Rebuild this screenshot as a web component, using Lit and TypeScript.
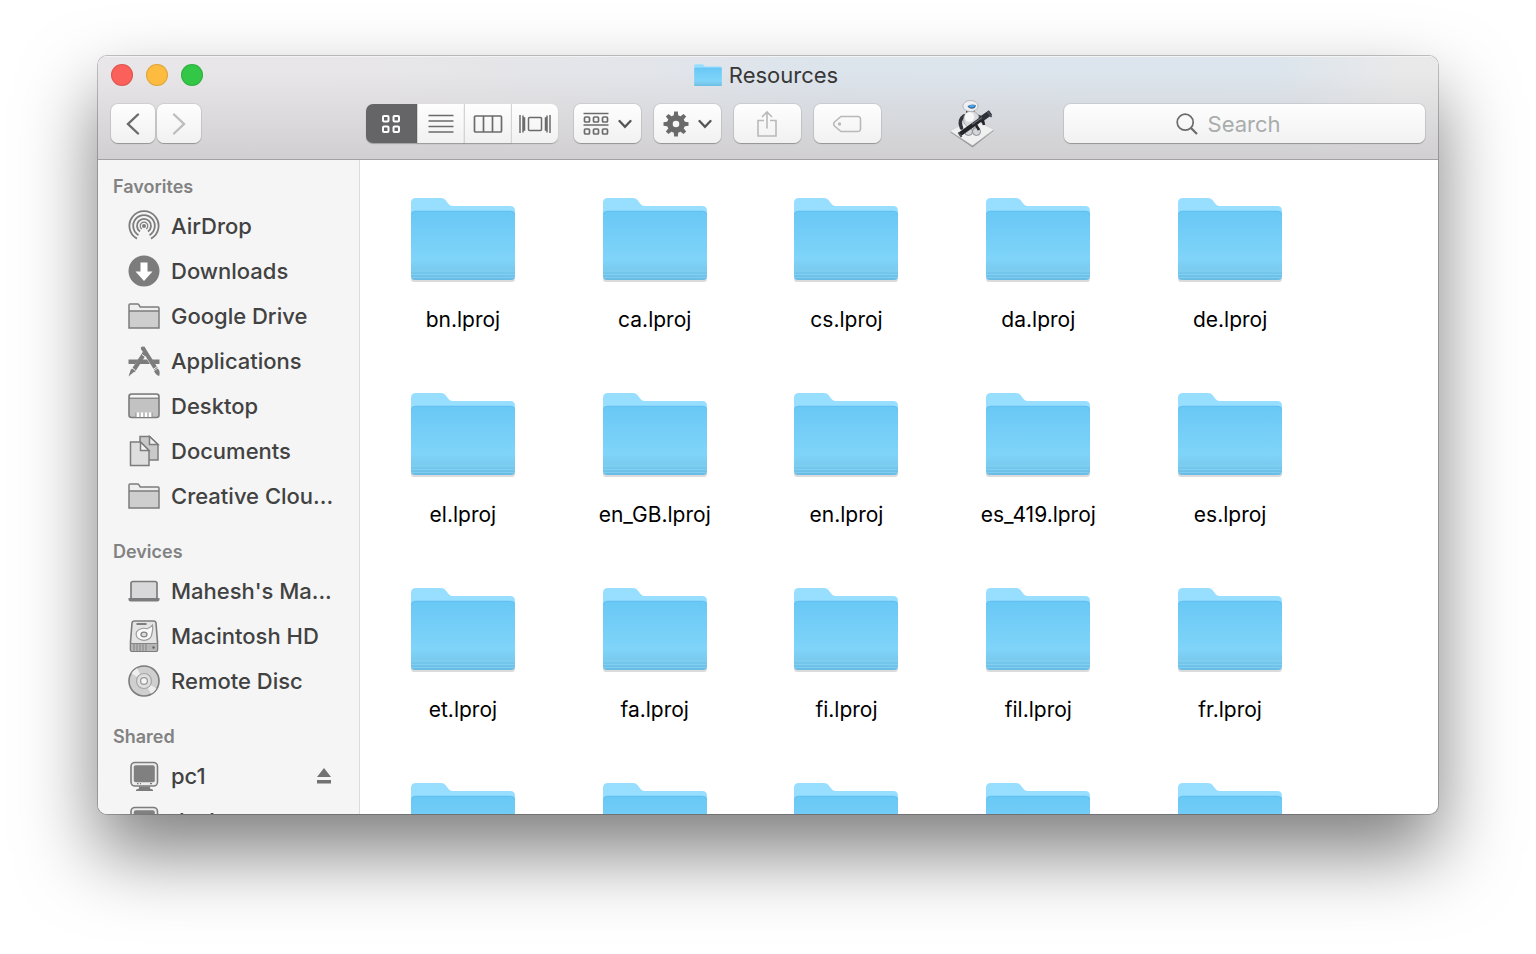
import { LitElement, html, css, svg, TemplateResult } from "lit";
import { customElement, property } from "lit/decorators.js";

type IconName =
  | "back" | "forward" | "grid" | "list" | "columns" | "flow" | "arrange" | "chevron"
  | "gear" | "share" | "tag" | "search" | "airdrop" | "downloads" | "folder"
  | "apps" | "desktop" | "documents" | "laptop" | "hd" | "disc" | "pc" | "eject" | "robot";

const icons: Record<IconName, [number, number, unknown]> = {
  back: [14, 22, svg`<path d="M12 1.500L2 11l10 9.500" fill="none" stroke="#6a6a6a" stroke-width="2.400" stroke-linecap="round"/>`],
  forward: [14, 22, svg`<path d="M2 1.500L12 11L2 20.500" fill="none" stroke="#bdbdc0" stroke-width="2.400" stroke-linecap="round"/>`],
  grid: [20, 20, svg`<g fill="none" stroke="#fff" stroke-width="2"><rect x="2" y="2" width="5.500" height="5.500" rx="1"/><rect x="12.500" y="2" width="5.500" height="5.500" rx="1"/><rect x="2" y="12.500" width="5.500" height="5.500" rx="1"/><rect x="12.500" y="12.500" width="5.500" height="5.500" rx="1"/></g>`],
  list: [26, 20, svg`<path d="M.5 1.500h25M.5 7h25M.5 12.500h25M.5 18h25" fill="none" stroke="#6b6b6b" stroke-width="1.600"/>`],
  columns: [30, 20, svg`<g fill="none" stroke="#6b6b6b" stroke-width="1.700"><rect x="1.500" y="2" width="27" height="16" rx="1"/><path d="M10.500 2v16M19.500 2v16"/></g>`],
  flow: [34, 20, svg`<g fill="none" stroke="#6b6b6b" stroke-width="1.500"><path d="M2 1v18M32 1v18M5 1.500v17M29 1.500v17M5 4h1.500v12H5M29 4h-1.500v12H29"/><rect x="10.500" y="3.500" width="13" height="13" rx="1"/></g>`],
  arrange: [26, 24, svg`<g fill="none" stroke="#6b6b6b" stroke-width="1.700"><path d="M.5 1.500h25M.5 13h25"/><rect x="1.500" y="5" width="5" height="5" rx="1"/><rect x="10.500" y="5" width="5" height="5" rx="1"/><rect x="19.500" y="5" width="5" height="5" rx="1"/><rect x="1.500" y="17" width="5" height="5" rx="1"/><rect x="10.500" y="17" width="5" height="5" rx="1"/><rect x="19.500" y="17" width="5" height="5" rx="1"/></g>`],
  chevron: [14, 10, svg`<path d="M1.500 2L7 7.800L12.500 2" fill="none" stroke="#555" stroke-width="2.300" stroke-linecap="round"/>`],
  gear: [26, 26, svg`<g transform="translate(-2 -2)" fill="#6a6a6a">${[0, 45, 90, 135, 180, 225, 270, 315].map(
    (a) => svg`<path transform="rotate(${a} 15 15)" d="M13.200 2.500h3.600l.6 5h-4.800z"/>`)}<path fill-rule="evenodd" d="M15 6a9 9 0 1 0 0 18a9 9 0 1 0 0-18zM15 11.700a3.300 3.300 0 1 1 0 6.600a3.300 3.300 0 1 1 0-6.600z"/></g>`],
  share: [22, 28, svg`<g fill="none" stroke="#b9b9bb" stroke-width="1.600"><path d="M8 10.500H2V26h18V10.500h-6M11 18.500V2M6 7l5-5l5 5"/></g>`],
  tag: [30, 18, svg`<path d="M9 1.500h17a2.500 2.500 0 0 1 2.500 2.500v10a2.500 2.500 0 0 1-2.500 2.500H9L2.500 11q-1.600-2 0-4z" fill="none" stroke="#b9b9bb" stroke-width="1.600"/><circle cx="7.500" cy="9" r="1.700" fill="#b9b9bb"/>`],
  search: [22, 22, svg`<circle cx="9.200" cy="9.200" r="8" fill="none" stroke="#6b6b6b" stroke-width="1.700"/><path d="M15 15l6 6" stroke="#6b6b6b" stroke-width="2.200"/>`],
  airdrop: [32, 32, svg`<g fill="none" stroke="#7c7c7c" stroke-width="1.800"><path d="M9 28.600a14.600 14.600 0 1 1 14 0"/><path d="M10.500 25.200a10.800 10.800 0 1 1 11 0"/><path d="M12 21.600a7 7 0 1 1 8 0"/></g><circle cx="16" cy="16" r="2" fill="#7c7c7c"/><path d="M13.800 19a3.800 3.800 0 1 1 4.400 0" fill="none" stroke="#7c7c7c" stroke-width="1.200"/>`],
  downloads: [32, 32, svg`<circle cx="16" cy="16" r="15.500" fill="#7c7c7c"/><path d="M12.500 7.500h7v9h5L16 26L7.500 16.500h5z" fill="#fff"/>`],
  folder: [32, 32, svg`<path d="M1 28V5q0-1 1-1h8q1 0 1.500 1l1 2H30q1 0 1 1v20z" fill="#eee"/><path d="M1 11h30v17H1z" fill="#cecece"/><path d="M1 28V5q0-1 1-1h7.500q1 0 1.500 1l1.200 2H30q1 0 1 1v20zM1 11h30" fill="none" stroke="#7c7c7c" stroke-width="1.500"/>`],
  apps: [32, 32, svg`<path d="M.5 14.500h31v4.500h-31z" fill="#7c7c7c"/><path d="M13 4L29 29M20 7.500L4.500 28" stroke="#f5f5f5" stroke-width="7"/><path d="M12.500 14.500h6.500l3 4.500H9.500z" fill="#7c7c7c"/><path d="M14.500 2.500L28 24M18 6L5 26" stroke="#7c7c7c" stroke-width="4.200"/><path d="M12.800 2.600q1.700-2 3.600-.6l1.200 2-3.400 2zM26 26l4-2.500q2.500 3 1.200 7.500q-3-.3-5.200-5zM3 24l3.500 2.500L.5 31.500z" fill="#7c7c7c"/><path d="M25 24.500l4-2.800M3.500 22.500l4 3M14 9.500l3.500 2.500" stroke="#f5f5f5" stroke-width="1"/>`],
  desktop: [32, 32, svg`<rect x="1" y="4" width="30" height="23.500" rx="2.500" fill="#c2c2c2"/><path d="M2 8V6.500Q2 5 3.500 5h25Q30 5 30 6.500V8z" fill="#f6f6f6"/><rect x="1" y="4" width="30" height="23.500" rx="2.500" fill="none" stroke="#7c7c7c" stroke-width="1.600"/><path d="M1 8.200h30" stroke="#7c7c7c" stroke-width="1.200"/><path d="M8 22.500h16V27H8z" fill="#fff"/><path d="M8 22.500V27M12 22.500V27M16 22.500V27M20 22.500V27M24 22.500V27" stroke="#999" stroke-width="1.200"/>`],
  documents: [32, 32, svg`<g stroke="#7c7c7c" stroke-width="1.500"><path d="M12 1.500h9.500L30 9.500V25H12z" fill="#c9c9c9"/><path d="M21.500 1.500v8H30z" fill="#f2f2f2"/><path d="M2.500 7h10l8.500 8.500V30.500H2.500z" fill="#dedede"/><path d="M12.500 7v8.500H21z" fill="#f5f5f5"/></g>`],
  laptop: [32, 32, svg`<rect x="3" y="6.500" width="26" height="18" rx="2" fill="#d8d8da" stroke="#7c7c7c" stroke-width="1.700"/><path d="M.5 23h31v1.500q0 2-2 2h-27q-2 0-2-2z" fill="#7c7c7c"/>`],
  hd: [32, 32, svg`<path d="M6.500 1h19q2.200 0 2.500 2l1.500 19v7.500q0 2-2 2h-23q-2 0-2-2V22L4 3q.3-2 2.500-2z" fill="#e4e4e4" stroke="#7c7c7c" stroke-width="1.600"/><path d="M3 24h26v6q0 .8-1 .8H4q-1 0-1-.8z" fill="#b5b5b5"/><path d="M2.500 23.500h27M6 24v7M9 24v7M12 24v7M15 24v7M18 24v7" stroke="#858585"/><path d="M8.500 4h10" stroke="#6c6c6c" stroke-width="1.700"/><path d="M24.500 5q.8 4-1.200 11a7.800 6 0 1 1-4.300-7.200q3.500-1.200 5.500-3.800z" fill="#fafafa" stroke="#9b9b9b" stroke-width="1.200"/><ellipse cx="16" cy="14.500" rx="3" ry="2.300" fill="#ddd" stroke="#858585" stroke-width="1.300"/><circle cx="25.500" cy="27.500" r="1.200" fill="#666"/>`],
  disc: [32, 32, svg`<circle cx="16" cy="16" r="15" fill="#cfcfcf" stroke="#7c7c7c" stroke-width="1.600"/><path d="M16 16L3.500 8.500A15 15 0 0 1 9 3.200zM16 16l12.500 7.500a15 15 0 0 1-5.500 5.300z" fill="#eee"/><circle cx="16" cy="16" r="7.500" fill="#dfdfdf" stroke="#a5a5a5" stroke-width="1.200"/><circle cx="16" cy="16" r="3.400" fill="#f5f5f5" stroke="#999" stroke-width="1.300"/>`],
  pc: [32, 32, svg`<rect x="3" y="2.500" width="26.500" height="23.500" rx="4" fill="#ececec" stroke="#7c7c7c" stroke-width="1.600"/><rect x="5.800" y="5.300" width="21" height="17" rx="2" fill="#808080"/><path d="M9 23.700h1.500M12 23.700h1M22 23.700h2" stroke="#777" stroke-width="1.300"/><path d="M11 26.500h11v2l3 1.200v1.300H8v-1.300l3-1.200z" fill="#7c7c7c"/>`],
  eject: [16, 18, svg`<path d="M8 1l7 9H1zM1 13h14v3.500H1z" fill="#727272"/>`],
  robot: [44, 48, svg`
    <path d="M0 32L22 20l22 10.500L22.500 47.500z" fill="#98989b"/>
    <path d="M0 31L22 19l22 10.500L22.500 45.500z" fill="#f0f0f1" stroke="#c6c6c8" stroke-width=".5"/>
    <path d="M14 16q-6 4-2.500 12" fill="none" stroke="#34363c" stroke-width="3.600" stroke-linecap="round"/>
    <path d="M28 16q5 1 5 7" fill="none" stroke="#4a4c52" stroke-width="3"/>
    <path d="M16 9h9v4h-9z" fill="#56585e"/>
    <ellipse cx="21.500" cy="19.500" rx="8" ry="8.500" fill="#d9dadd" stroke="#97989c" stroke-width=".7"/>
    <ellipse cx="19.500" cy="17" rx="4.800" ry="4.800" fill="#f7f7f8"/>
    <ellipse cx="18.500" cy="31.500" rx="4" ry="4" fill="#d5d6d9" stroke="#77787d" stroke-width=".8"/>
    <ellipse cx="26.500" cy="31.500" rx="4" ry="4" fill="#d5d6d9" stroke="#77787d" stroke-width=".8"/>
    <ellipse cx="20.500" cy="6" rx="7.600" ry="5.500" fill="#f0f0f2" stroke="#a3a4a8" stroke-width=".7"/>
    <path d="M17.500 6q4-2.600 8.500-.8q-.6 3.600-4 3.600q-3.500 0-4.500-2.800z" fill="#3f6f9c"/>
    <path d="M18.500 6.200q3.500-1.800 6.800-.6q-3 3-6.800.6z" fill="#46aaf2"/>
    <path d="M9.500 34.500L37 15" stroke="#23252b" stroke-width="4.400"/>
    <path d="M30 20L40.500 12.500" stroke="#2d3037" stroke-width="5.600"/>
    <path d="M22 24.500l10-7" stroke="#666b75" stroke-width="1.200"/>
    <path d="M26 25l3 5M32.500 20l1.500 5" stroke="#23252b" stroke-width="2.600"/>
    <path d="M8.500 32.500l3 4.500M37.500 11.500l4 5.500" stroke="#4c4f57" stroke-width="2"/>`],
};

const icon = (name: IconName): TemplateResult => {
  const [w, h, body] = icons[name];
  return html`<svg width=${w} height=${h} viewBox="0 0 ${w} ${h}" aria-hidden="true">${body}</svg>`;
};

@customElement("folder-icon")
class FolderIcon extends LitElement {
  @property({ type: Number }) width = 106;
  static styles = css`
    :host { display: block; }
    svg { display: block; }
  `;
  render() {
    return html`<svg width=${this.width} viewBox="0 0 106 86" aria-hidden="true">
      <defs>
        <linearGradient id="front" x1="0" y1="0" x2="0" y2="1">
          <stop offset="0" stop-color="#69c8f5"/><stop offset=".7" stop-color="#7fd4f9"/>
          <stop offset=".85" stop-color="#79cbef"/><stop offset="1" stop-color="#67bbe4"/>
        </linearGradient>
      </defs>
      <rect x="1" y="70" width="104" height="15" rx="3" fill="#000" opacity=".14"/>
      <path d="M1 78V6q0-5 5-5h25q3 0 4.500 2l3 4q1.500 2 4 2H100q5 0 5 5v64z" fill="#97deff"/>
      <path d="M1 18q0-4 4-4h96q4 0 4 4v61q0 4-4 4H5q-4 0-4-4z" fill="url(#front)"/>
      <path d="M1.500 17.500q.5-3.300 4-3.300h95q3.500 0 4 3.300" fill="none" stroke="#5bbbea" stroke-width=".6"/>
      <path d="M1 74h104M1 77.500h104M1 80.500h104" stroke="#8ed6f5" stroke-width=".6"/>
    </svg>`;
  }
}

interface Place { name: string; icon: IconName; eject?: boolean; }
const sections: { title: string; places: Place[] }[] = [
  { title: "Favorites", places: [
    { name: "AirDrop", icon: "airdrop" },
    { name: "Downloads", icon: "downloads" },
    { name: "Google Drive", icon: "folder" },
    { name: "Applications", icon: "apps" },
    { name: "Desktop", icon: "desktop" },
    { name: "Documents", icon: "documents" },
    { name: "Creative Clou...", icon: "folder" },
  ] },
  { title: "Devices", places: [
    { name: "Mahesh's Ma...", icon: "laptop" },
    { name: "Macintosh HD", icon: "hd" },
    { name: "Remote Disc", icon: "disc" },
  ] },
  { title: "Shared", places: [
    { name: "pc1", icon: "pc", eject: true },
    { name: "desktop", icon: "pc" },
  ] },
];

const folders = ["bn", "ca", "cs", "da", "de", "el", "en_GB", "en", "es_419", "es",
  "et", "fa", "fi", "fil", "fr", "gu", "he", "hi", "hr", "hu"];

@customElement("finder-toolbar")
class FinderToolbar extends LitElement {
  static styles = css`
    :host {
      display: block;
      padding: 0 13px 16px;
      border-bottom: 1px solid #a2a1a3;
      background:
        linear-gradient(to bottom, rgba(211, 209, 211, 0) 15%, #d2d0d2 96%),
        linear-gradient(to right, #e8e6e8 18%, #e3e5ea 40%, #dce4ec 55%, #dce5ed 88%, #e9e9ea 97%);
      box-shadow: inset 0 1px 0 #f3f3f4;
    }
    svg { display: block; flex: none; }
    button { font: inherit; padding: 0; margin: 0; border: 0; }
    .title { display: grid; grid-template-columns: 1fr auto 1fr; align-items: center; height: 38px; margin-bottom: 10px; }
    .lights { display: flex; gap: 13px; }
    .light { width: 22px; height: 22px; border-radius: 50%; box-shadow: inset 0 0 0 1px rgba(0, 0, 0, 0.12); }
    .close { background: #fc605b; }
    .minimize { background: #fdbc40; }
    .zoom { background: #33c748; }
    h1 { display: flex; align-items: center; gap: 7px; margin: 0; padding-right: 4px; font-size: 22px; line-height: 28px; font-weight: 400; color: #383838; }
    .bar { display: flex; align-items: center; }
    .nav { display: flex; gap: 2px; }
    .views { display: flex; border-radius: 7px; }
    .tools { display: flex; gap: 13px; margin-left: 16px; }
    .btn {
      display: flex; align-items: center; justify-content: center; gap: 9px;
      width: 67px; height: 39px; border-radius: 7px;
      background: linear-gradient(#fefefe, #f1f1f1);
      box-shadow: 0 0 0 1px rgba(0, 0, 0, 0.07), 0 1px 1px rgba(0, 0, 0, 0.25);
    }
    .nav .btn { width: 44px; }
    .views .btn { width: 47px; border-radius: 0; border-left: 1px solid #d4d4d5; box-shadow: 0 1px 1px rgba(0, 0, 0, 0.25); }
    .views .btn:first-child { width: 51px; border-left: 0; border-radius: 7px 0 0 7px; background: #656567; }
    .views .btn:last-child { border-radius: 0 7px 7px 0; }
    .gap { flex: 70 1 0; }
    .gap.wide { flex-grow: 166; }
    .robot { display: flex; align-items: center; height: 39px; background: none; }
    .search {
      display: flex; align-items: center; justify-content: center; gap: 10px;
      flex: 0 1 361px; height: 39px; border-radius: 7px; cursor: text;
      background: linear-gradient(#fefefe, #f1f1f1);
      box-shadow: 0 0 0 1px rgba(0, 0, 0, 0.07), 0 1px 1px rgba(0, 0, 0, 0.25);
    }
    input { width: 106px; height: 32px; padding: 0; border: 0; outline: 0; background: none; font: inherit; font-size: 22px; color: #333; }
    input::placeholder { color: #a9adac; opacity: 1; }
  `;
  render() {
    return html`
      <div class="title">
        <div class="lights">
          <button class="light close" aria-label="Close"></button>
          <button class="light minimize" aria-label="Minimize"></button>
          <button class="light zoom" aria-label="Zoom"></button>
        </div>
        <h1><folder-icon .width=${28}></folder-icon>Resources</h1>
      </div>
      <div class="bar">
        <div class="nav">
          <button class="btn" aria-label="Back">${icon("back")}</button>
          <button class="btn" aria-label="Forward">${icon("forward")}</button>
        </div>
        <span class="gap wide"></span>
        <div class="views">
          <button class="btn" aria-label="Icons" aria-pressed="true">${icon("grid")}</button>
          <button class="btn" aria-label="List">${icon("list")}</button>
          <button class="btn" aria-label="Columns">${icon("columns")}</button>
          <button class="btn" aria-label="Cover Flow">${icon("flow")}</button>
        </div>
        <div class="tools">
          <button class="btn" aria-label="Arrange" aria-haspopup="menu">${icon("arrange")}${icon("chevron")}</button>
          <button class="btn" aria-label="Action" aria-haspopup="menu">${icon("gear")}${icon("chevron")}</button>
          <button class="btn" aria-label="Share">${icon("share")}</button>
          <button class="btn" aria-label="Edit Tags">${icon("tag")}</button>
        </div>
        <span class="gap"></span>
        <button class="robot" aria-label="Automator">${icon("robot")}</button>
        <span class="gap"></span>
        <label class="search">${icon("search")}<input type="text" placeholder="Search" aria-label="Search"></label>
      </div>`;
  }
}

@customElement("finder-sidebar")
class FinderSidebar extends LitElement {
  static styles = css`
    :host { display: block; overflow-y: auto; scrollbar-width: none; padding-top: 11px; background: #f5f5f5; border-right: 1px solid #dcdcdc; }
    svg { display: block; flex: none; }
    h2 { margin: 0; padding-left: 15px; font-size: 18px; line-height: 32px; font-weight: 600; color: #828282; }
    ul { list-style: none; margin: 0 0 18px; padding: 0; }
    li { display: flex; align-items: center; height: 45px; padding: 0 27px 0 30px; }
    a { display: flex; align-items: center; gap: 11px; flex: 1; white-space: nowrap; text-decoration: none; color: #424242; font-size: 22px; line-height: 32px; font-weight: 450; }
    button { padding: 0; border: 0; background: none; }
  `;
  render() {
    return html`<nav>${sections.map((s) => html`
      <h2>${s.title}</h2>
      <ul>${s.places.map((p) => html`<li>
        <a href="#">${icon(p.icon)}<span>${p.name}</span></a>
        ${p.eject ? html`<button aria-label="Eject">${icon("eject")}</button>` : ""}
      </li>`)}</ul>`)}</nav>`;
  }
}

@customElement("app-root")
class AppRoot extends LitElement {
  static styles = css`
    :host {
      display: flex; box-sizing: border-box; height: 100vh; overflow: hidden;
      padding: 55px 97px 139px; background: #fff;
      font-family: Inter, Roboto, "Liberation Sans", sans-serif;
    }
    .window {
      flex: 1; min-width: 0; display: grid; grid-template: auto minmax(0, 1fr) / 262px minmax(0, 1fr);
      border: 1px solid rgba(0, 0, 0, 0.22); border-radius: 10px; overflow: hidden;
      background: #fff; background-clip: padding-box;
      box-shadow: 0 38px 76px rgba(0, 0, 0, 0.5);
    }
    finder-toolbar { grid-column: 1 / -1; }
    main { overflow-y: auto; scrollbar-width: none; }
    .files {
      display: grid; grid-template-columns: repeat(auto-fill, minmax(180px, 1fr)); grid-auto-rows: 195px;
      list-style: none; margin: 0; padding: 37px 112px 0 7px;
    }
    .file { display: flex; flex-direction: column; align-items: center; gap: 22px; text-decoration: none; color: #000; font-size: 21px; line-height: 30px; }
  `;
  render() {
    return html`<div class="window">
      <finder-toolbar></finder-toolbar>
      <finder-sidebar></finder-sidebar>
      <main><ul class="files">${folders.map((f) => html`<li>
        <a class="file" href="#"><folder-icon></folder-icon><span>${f}.lproj</span></a>
      </li>`)}</ul></main>
    </div>`;
  }
}
